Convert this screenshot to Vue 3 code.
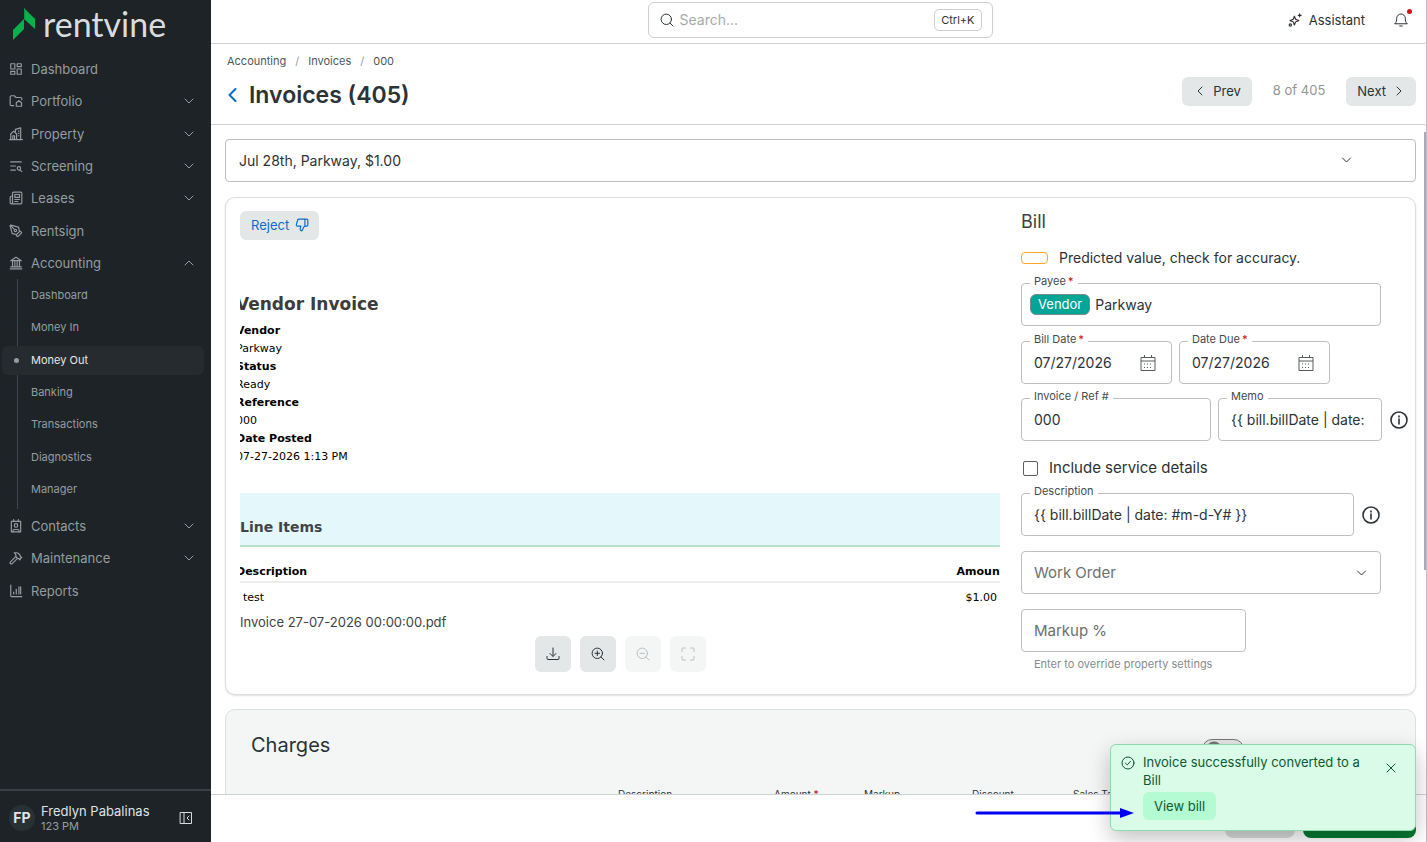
<script setup>
import { ref } from 'vue'

const mainNav = [
  { label: 'Dashboard', icon: 'dashboard' },
  { label: 'Portfolio', icon: 'portfolio', chevron: 'down' },
  { label: 'Property', icon: 'property', chevron: 'down' },
  { label: 'Screening', icon: 'screening', chevron: 'down' },
  { label: 'Leases', icon: 'leases', chevron: 'down' },
  { label: 'Rentsign', icon: 'rentsign' },
  { label: 'Accounting', icon: 'accounting', chevron: 'up' }
]
const subNav = ['Dashboard', 'Money In', 'Money Out', 'Banking', 'Transactions', 'Diagnostics', 'Manager']
const lowerNav = [
  { label: 'Contacts', icon: 'contacts', chevron: 'down' },
  { label: 'Maintenance', icon: 'maintenance', chevron: 'down' },
  { label: 'Reports', icon: 'reports' }
]

const icons = {
  dashboard: ['M3 3h7v9H3z', 'M14 3h7v5h-7z', 'M14 12h7v9h-7z', 'M3 16h7v5H3z'],
  portfolio: ['M8 20H4a2 2 0 0 1-2-2V5a2 2 0 0 1 2-2h5l3 3h8a2 2 0 0 1 2 2v2', 'M12.500 15l4.500-3.500 4.500 3.500v6h-9z'],
  property: ['M1 21.500h22', 'M3 21V12l5-5 5 5v9', 'M6.500 21v-6h3v6', 'M11 8V4l9-2.500V21', 'M16 7h1M16 11h1M16 15h1'],
  screening: ['M3 5h18', 'M3 12h8', 'M3 19h8', 'M19 19.500l3 2', 'M20 16a3 3 0 1 1-6 0 3 3 0 0 1 6 0z'],
  leases: ['M4 22h16a2 2 0 0 0 2-2V4a2 2 0 0 0-2-2H8a2 2 0 0 0-2 2v16a2 2 0 0 1-4 0v-9a2 2 0 0 1 2-2h2', 'M10 6h8v5h-8z', 'M10 14.500h8', 'M10 18h5'],
  rentsign: ['M15.700 21.300a1 1 0 0 1-1.400 0l-1.600-1.600a1 1 0 0 1 0-1.400l5.600-5.600a1 1 0 0 1 1.400 0l1.600 1.600a1 1 0 0 1 0 1.400z', 'M18 13l-1.400-6.900a1 1 0 0 0-.7-.8L3.200 2a1 1 0 0 0-1.200 1.200l3.300 12.700a1 1 0 0 0 .8.700L13 18', 'M2.300 2.300l7.300 7.300', 'M13 11a2 2 0 1 1-4 0 2 2 0 0 1 4 0z'],
  accounting: ['M2 22h20', 'M3 18.500h18', 'M3 8l9-6 9 6z', 'M6 9v9M10 9v9M14 9v9M18 9v9'],
  contacts: ['M4 4h16v18H4z', 'M8 1v3M16 1v3', 'M15 11a3 3 0 1 1-6 0 3 3 0 0 1 6 0z', 'M7 22v-2a2 2 0 0 1 2-2h6a2 2 0 0 1 2 2v2'],
  maintenance: ['M14.500 12.500L5.500 21.500a2.100 2.100 0 0 1-3-3l9-9', 'M17.500 15l4.500-4.500', 'M21.500 11.500l-1.900-1.900a2 2 0 0 1-.6-1.400V7l-2.300-2.300A6 6 0 0 0 12.500 3H9l1 .8A6.200 6.200 0 0 1 12 8.400V10l2.500 2.500h1.200a2 2 0 0 1 1.400.6L19 15'],
  reports: ['M3 2v18a1.500 1.500 0 0 0 1.500 1.500H22', 'M8 17v-3', 'M12.500 17V9', 'M17 17V5M20 17V5']
}

const search = ref('')
const markup = ref('')
const template = '{{ bill.billDate | date: #m-d-Y# }}'
const docRows = [
  ['Vendor', 'Parkway'],
  ['Status', 'Ready'],
  ['Reference', '000'],
  ['Date Posted', '07-27-2026 1:13 PM']
]
</script>

<template>
  <div class="shell">
    <aside class="sidebar">
      <a class="brand" href="#" aria-label="rentvine">
        <svg class="brand-mark" viewBox="0 0 22 32" aria-hidden="true">
          <path d="M11 0L22 11V21L11 11Z" fill="#0bb14f" />
          <path d="M0 22L11 11V21L0 32Z" fill="#0bb14f" />
          <path d="M11 0V11L12 12V1Z" fill="#06943f" />
        </svg>
        <span>rentvine</span>
      </a>
      <nav class="nav" aria-label="Main">
        <ul class="nav-list nav-main">
          <li v-for="item in mainNav" :key="item.label">
            <a class="nav-item" href="#">
              <svg class="nav-icon" viewBox="0 0 24 24"><path v-for="d in icons[item.icon]" :key="d" :d="d" /></svg>
              <span>{{ item.label }}</span>
              <svg v-if="item.chevron" class="nav-chevron" :class="{ up: item.chevron === 'up' }" viewBox="0 0 10 10"><path d="M1 3l4 4 4-4" /></svg>
            </a>
          </li>
        </ul>
        <ul class="nav-list nav-sub">
          <li v-for="label in subNav" :key="label">
            <a class="sub-item" :class="{ active: label === 'Money Out' }" href="#">{{ label }}</a>
          </li>
        </ul>
        <ul class="nav-list nav-lower">
          <li v-for="item in lowerNav" :key="item.label">
            <a class="nav-item" href="#">
              <svg class="nav-icon" viewBox="0 0 24 24"><path v-for="d in icons[item.icon]" :key="d" :d="d" /></svg>
              <span>{{ item.label }}</span>
              <svg v-if="item.chevron" class="nav-chevron" viewBox="0 0 10 10"><path d="M1 3l4 4 4-4" /></svg>
            </a>
          </li>
        </ul>
      </nav>
      <div class="user">
        <span class="avatar">FP</span>
        <div class="user-text">
          <span class="user-name">Fredlyn Pabalinas</span>
          <span class="user-time">123 PM</span>
        </div>
        <button class="collapse" type="button" aria-label="Collapse sidebar">
          <svg viewBox="0 0 14 14"><path d="M1.500 1.500h11v11h-11zM5 1.500v11M10 5L8 7l2 2" /></svg>
        </button>
      </div>
    </aside>

    <div class="main">
      <header class="topbar">
        <div class="search">
          <svg class="search-icon" viewBox="0 0 14 14"><path d="M11.500 6.300a5.200 5.200 0 1 1-10.400 0 5.200 5.200 0 0 1 10.400 0zM10 10l3 3" /></svg>
          <input v-model="search" type="text" placeholder="Search..." aria-label="Search" />
          <kbd>Ctrl+K</kbd>
        </div>
        <div class="top-actions">
          <button class="assistant" type="button">
            <svg viewBox="0 0 24 24"><path d="M11 5.500l1.700 4.300a2.500 2.500 0 0 0 1.400 1.400L18.500 13l-4.400 1.700a2.500 2.500 0 0 0-1.400 1.400L11 20.500l-1.700-4.400a2.500 2.500 0 0 0-1.400-1.400L3.500 13l4.400-1.800a2.500 2.500 0 0 0 1.400-1.400z" /><path d="M20 1.500v5M17.500 4h5" /><circle cx="4" cy="20.500" r="2" /></svg>
            Assistant
          </button>
          <button class="bell" type="button" aria-label="Notifications">
            <svg viewBox="0 0 14 16"><path d="M1 11.500c1.400-1.400 1.700-2.700 1.700-5.200a4.300 4.300 0 0 1 8.600 0c0 2.500.3 3.800 1.700 5.200z" /><path d="M5.700 14h2.600" /></svg>
            <span class="dot"></span>
          </button>
        </div>
      </header>

      <div class="page-head">
        <div>
          <nav class="crumbs" aria-label="Breadcrumb">
            <a href="#">Accounting</a><i>/</i><a href="#">Invoices</a><i>/</i><a href="#">000</a>
          </nav>
          <h1>
            <a class="back" href="#" aria-label="Back"><svg viewBox="0 0 9 14"><path d="M7.500 1l-6 6 6 6" /></svg></a>
            Invoices (405)
          </h1>
        </div>
        <div class="pager">
          <button class="btn" type="button"><svg viewBox="0 0 6 10"><path d="M5 1L1 5l4 4" /></svg>Prev</button>
          <span>8 of 405</span>
          <button class="btn" type="button">Next<svg viewBox="0 0 6 10"><path d="M1 1l4 4-4 4" /></svg></button>
        </div>
      </div>

      <main class="content">
        <div class="picker">
          <select aria-label="Invoice">
            <option>Jul 28th, Parkway, $1.00</option>
          </select>
          <svg viewBox="0 0 10 6"><path d="M1 1l4 4 4-4" /></svg>
        </div>

        <section class="card invoice">
          <div class="preview">
            <button class="btn reject" type="button">
              Reject
              <svg viewBox="0 0 24 24"><path d="M17 14V2M9 18.100L10 14H4.200a2 2 0 0 1-1.900-2.600l2.300-8A2 2 0 0 1 6.500 2H20a2 2 0 0 1 2 2v8a2 2 0 0 1-2 2h-2.800a2 2 0 0 0-1.800 1.100L12 22a3.100 3.100 0 0 1-3-3.900z" /></svg>
            </button>
            <div class="doc">
              <div class="doc-body">
                <h2>Vendor Invoice</h2>
                <dl>
                  <template v-for="row in docRows" :key="row[0]">
                    <dt>{{ row[0] }}</dt>
                    <dd>{{ row[1] }}</dd>
                  </template>
                </dl>
                <h3>Line Items</h3>
                <table>
                  <thead>
                    <tr><th>Description</th><th class="num">Amount</th></tr>
                  </thead>
                  <tbody>
                    <tr><td>test</td><td class="num">$1.00</td></tr>
                  </tbody>
                </table>
              </div>
            </div>
            <p class="file">Invoice 27-07-2026 00:00:00.pdf</p>
            <div class="tools">
              <button type="button" aria-label="Download"><svg viewBox="0 0 14 14"><path d="M7 1v8M4 6.500l3 3 3-3M1 9.500v2a1 1 0 0 0 1 1h10a1 1 0 0 0 1-1v-2" /></svg></button>
              <button type="button" aria-label="Zoom in"><svg viewBox="0 0 14 14"><path d="M11.500 6.300a5.200 5.200 0 1 1-10.400 0 5.200 5.200 0 0 1 10.400 0zM10 10l3 3M6.300 4v4.600M4 6.300h4.600" /></svg></button>
              <button type="button" aria-label="Zoom out" disabled><svg viewBox="0 0 14 14"><path d="M11.500 6.300a5.200 5.200 0 1 1-10.400 0 5.200 5.200 0 0 1 10.400 0zM10 10l3 3M4 6.300h4.600" /></svg></button>
              <button type="button" aria-label="Fit to screen" disabled><svg viewBox="0 0 14 14"><path d="M1 4.500V2a1 1 0 0 1 1-1h2.500M9.500 1H12a1 1 0 0 1 1 1v2.500M13 9.500V12a1 1 0 0 1-1 1H9.500M4.500 13H2a1 1 0 0 1-1-1V9.500" /></svg></button>
            </div>
          </div>

          <form class="bill" @submit.prevent>
            <h2>Bill</h2>
            <p class="legend"><span class="swatch"></span>Predicted value, check for accuracy.</p>

            <div class="field payee">
              <label for="payee">Payee<b>*</b></label>
              <span class="chip">Vendor</span>
              <input id="payee" type="text" value="Parkway" />
            </div>

            <div class="row dates-row">
              <div class="field date">
                <label for="bill-date">Bill Date<b>*</b></label>
                <input id="bill-date" type="text" value="07/27/2026" />
                <svg class="cal" viewBox="0 0 16 18"><path d="M1 3.500h14v13H1zM1 7h14M4.500 1v3M11.500 1v3" /><path class="dots" d="M4 10h8M4 13.500h8" /></svg>
              </div>
              <div class="field date">
                <label for="date-due">Date Due<b>*</b></label>
                <input id="date-due" type="text" value="07/27/2026" />
                <svg class="cal" viewBox="0 0 16 18"><path d="M1 3.500h14v13H1zM1 7h14M4.500 1v3M11.500 1v3" /><path class="dots" d="M4 10h8M4 13.500h8" /></svg>
              </div>
            </div>

            <div class="row">
              <div class="field ref">
                <label for="ref-no">Invoice / Ref #</label>
                <input id="ref-no" type="text" value="000" />
              </div>
              <div class="field memo">
                <label for="memo">Memo</label>
                <input id="memo" type="text" :value="template" />
              </div>
              <svg class="info" viewBox="0 0 18 18"><circle cx="9" cy="9" r="8" /><path d="M9 8v5M9 5v1" /></svg>
            </div>

            <label class="check"><input type="checkbox" />Include service details</label>

            <div class="row">
              <div class="field desc">
                <label for="desc">Description</label>
                <input id="desc" type="text" :value="template" />
              </div>
              <svg class="info" viewBox="0 0 18 18"><circle cx="9" cy="9" r="8" /><path d="M9 8v5M9 5v1" /></svg>
            </div>

            <div class="field order">
              <select aria-label="Work Order"><option>Work Order</option></select>
              <svg class="arrow" viewBox="0 0 10 6"><path d="M1 1l4 4 4-4" /></svg>
            </div>

            <div class="field markup">
              <input v-model="markup" type="text" placeholder="Markup %" aria-label="Markup %" aria-describedby="markup-hint" />
            </div>
            <p id="markup-hint" class="hint">Enter to override property settings</p>
          </form>
        </section>

        <section class="card charges">
          <div class="charges-head">
            <h2>Charges</h2>
            <input class="switch" type="checkbox" role="switch" aria-label="Charges option" />
          </div>
          <div class="charges-cols">
            <span>Description</span><span>Amount <b>*</b></span><span>Markup</span><span>Discount</span><span>Sales Tax</span>
          </div>
        </section>
        <span class="scrollbar"></span>
      </main>

      <footer class="actions">
        <button class="secondary" type="button" aria-label="Cancel"></button>
        <button class="primary" type="button" aria-label="Save"></button>
      </footer>
    </div>

    <div class="toast" role="status">
      <svg class="ok" viewBox="0 0 14 14"><circle cx="7" cy="7" r="6" /><path d="M4.500 7.200l1.800 1.700 3.200-3.600" /></svg>
      <div>
        <p>Invoice successfully converted to a Bill</p>
        <button class="view" type="button">View bill</button>
      </div>
      <button class="close" type="button" aria-label="Close"><svg viewBox="0 0 10 10"><path d="M1 1l8 8M9 1L1 9" /></svg></button>
    </div>
    <svg class="pointer" viewBox="0 0 160 12" aria-hidden="true"><path d="M2 6h144" stroke="#0000f5" stroke-width="3" stroke-linecap="round" /><path d="M145 1l14 5-14 5z" fill="#0000f5" /></svg>
  </div>
</template>

<style>
body {
  margin: 0;
  overflow: hidden;
}
</style>

<style scoped>
* {
  box-sizing: border-box;
}
.shell {
  display: flex;
  position: relative;
  height: 100vh;
  font-family: Inter, "Liberation Sans", sans-serif;
  color: #2c3236;
  background: #fff;
  overflow: hidden;
}
svg {
  fill: none;
  stroke: currentColor;
  stroke-linecap: round;
  stroke-linejoin: round;
  flex: none;
}
button, input, select {
  font: inherit;
  color: inherit;
}
button {
  border: 0;
  padding: 0;
  cursor: pointer;
}
a {
  color: inherit;
  text-decoration: none;
}
h1, h2, h3, p, dl, dd, ul {
  margin: 0;
  padding: 0;
}

/* Sidebar */
.sidebar {
  display: flex;
  flex-direction: column;
  flex: none;
  width: 211px;
  background: #1e2327;
  color: #949da3;
}
.brand {
  display: flex;
  align-items: center;
  gap: 8px;
  height: 53px;
  padding: 0 0 5px 13px;
  font-family: Lato, sans-serif;
  font-size: 34px;
  line-height: 40px;
  color: #d9dcdf;
}
.brand-mark {
  width: 22px;
  height: 32px;
  stroke: none;
}
.nav {
  flex: 1;
}
.nav-list {
  display: grid;
  grid-auto-rows: 1fr;
  list-style: none;
}
.nav-main {
  height: 226px;
}
.nav-sub {
  position: relative;
  height: 227px;
  margin-bottom: 4px;
}
.nav-sub::before {
  content: "";
  position: absolute;
  left: 17px;
  top: 0;
  bottom: -3px;
  width: 1px;
  background: #41484d;
}
.nav-lower {
  height: 97px;
}
.nav-list li {
  display: flex;
  align-items: center;
}
.nav-item {
  display: flex;
  flex: 1;
  align-items: center;
  gap: 8px;
  padding: 0 17px 0 9px;
  font-size: 13px;
  line-height: 20px;
}
.nav-icon {
  width: 14px;
  height: 14px;
  stroke-width: 2;
}
.nav-chevron {
  width: 10px;
  height: 10px;
  margin-left: auto;
}
.nav-chevron.up {
  transform: rotate(180deg);
}
.sub-item {
  position: relative;
  flex: 1;
  margin: 0 7px 0 2px;
  padding: 0 29px;
  border-radius: 6px;
  font-size: 11px;
  line-height: 29px;
}
.sub-item.active {
  background: #262b2f;
  color: #e6e8ea;
}
.sub-item.active::before {
  content: "";
  position: absolute;
  left: 12px;
  top: 12px;
  width: 5px;
  height: 5px;
  border-radius: 50%;
  background: #949da3;
}
.user {
  display: flex;
  align-items: center;
  height: 53px;
  padding: 2px 18px 0 9px;
  border-top: 2px solid #394045;
}
.avatar {
  width: 26px;
  height: 26px;
  margin-right: 6px;
  border-radius: 50%;
  background: #283133;
  color: #dfe3e5;
  font-size: 14px;
  font-weight: 700;
  line-height: 26px;
  text-align: center;
}
.user-text {
  display: flex;
  flex: 1;
  flex-direction: column;
}
.user-name {
  font-size: 13px;
  line-height: 16px;
  color: #dfe3e5;
}
.user-time {
  font-size: 11px;
  line-height: 14px;
}
.collapse {
  width: 14px;
  height: 14px;
  background: none;
  color: #d9dcdf;
}
.collapse svg {
  display: block;
}

/* Top bar and page heading */
.main {
  display: flex;
  flex: 1;
  flex-direction: column;
  min-width: 0;
  border-right: 1px solid #b6c0da;
}
.topbar {
  display: grid;
  grid-template-columns: 1fr 345px 1fr;
  flex: none;
  align-items: center;
  height: 44px;
  padding: 0 15px 4px 18px;
  border-bottom: 1px solid #d0d3d3;
}
.search {
  display: flex;
  grid-column: 2;
  align-items: center;
  gap: 6px;
  height: 36px;
  padding: 0 10px 0 11px;
  border: 1px solid #cbcfcf;
  border-radius: 6px;
}
.search-icon {
  width: 14px;
  height: 14px;
}
.search input {
  flex: 1;
  min-width: 0;
  padding: 0;
  border: 0;
  outline: 0;
  background: none;
  font-size: 14px;
}
.search input::placeholder {
  color: #a3acac;
}
kbd {
  padding: 0 6px;
  border: 1px solid #cbcfcf;
  border-radius: 5px;
  font: 11px/20px Inter, sans-serif;
}
.top-actions {
  display: flex;
  align-items: center;
  justify-content: flex-end;
  gap: 29px;
  padding-right: 3px;
}
.assistant {
  display: flex;
  align-items: center;
  gap: 7px;
  background: none;
  font-size: 13px;
}
.assistant svg {
  width: 14px;
  height: 14px;
  stroke-width: 2;
}
.bell {
  position: relative;
  width: 14px;
  height: 16px;
  background: none;
}
.bell svg {
  display: block;
}
.dot {
  position: absolute;
  top: -3px;
  right: -4px;
  width: 5px;
  height: 5px;
  border-radius: 50%;
  background: #d01414;
}
.page-head {
  display: flex;
  flex: none;
  justify-content: space-between;
  height: 81px;
  padding: 9px 10px 0 16px;
  border-bottom: 1px solid #d0d3d3;
}
.crumbs {
  display: flex;
  gap: 9px;
  font-size: 11px;
  line-height: 16px;
  color: #4d5759;
}
.crumbs i {
  font-style: normal;
  color: #939b9c;
}
h1 {
  display: flex;
  align-items: center;
  gap: 12px;
  margin-top: 10px;
  font-size: 23px;
  font-weight: 600;
  line-height: 32px;
}
.back {
  display: flex;
  margin-left: 1px;
  color: #0a6cc9;
}
.back svg {
  width: 9px;
  height: 14px;
  stroke-width: 2;
}
.pager {
  display: flex;
  align-items: flex-start;
  gap: 21px;
  padding-top: 24px;
  font-size: 13px;
}
.pager span {
  line-height: 27px;
  color: #919595;
}
.btn {
  display: flex;
  align-items: center;
  gap: 10px;
  height: 29px;
  padding: 0 11px;
  border-radius: 6px;
  background: #e3e7e7;
  font-size: 13px;
}
.pager .btn {
  padding: 0 11px 2px 11px;
}
.pager .btn:first-child {
  padding-left: 15px;
}
.pager .btn:last-child {
  padding-right: 14px;
}
.btn svg {
  width: 6px;
  height: 10px;
}

/* Scrolling content */
.content {
  position: relative;
  flex: 1;
  min-height: 0;
  padding: 14px 10px 0 14px;
  overflow: hidden;
}
.scrollbar {
  position: absolute;
  top: 7px;
  right: 0;
  width: 2px;
  height: 438px;
  background: #a3afb8;
}
.picker {
  position: relative;
  height: 43px;
  margin-bottom: 15px;
}
.picker select {
  width: 100%;
  height: 100%;
  padding: 0 13px;
  border: 1px solid #bcc0c0;
  border-radius: 4px;
  background: #fff;
  appearance: none;
  font-size: 14px;
}
.picker svg {
  position: absolute;
  top: 18px;
  right: 64px;
  width: 11px;
  height: 6px;
}
.card {
  border: 1px solid #dcdfdf;
  border-radius: 10px;
  background: #fff;
}
.invoice {
  display: grid;
  grid-template-columns: minmax(0, 1fr) 387px;
  gap: 21px;
  height: 498px;
  padding: 13px 7px 0 14px;
  margin-bottom: 14px;
  box-shadow: 0 1px 2px rgba(0, 0, 0, 0.12);
}
.preview {
  display: flex;
  flex-direction: column;
}
.reject {
  align-self: flex-start;
  gap: 6px;
  padding: 0 10px 2px 11px;
  color: #0a6cc9;
}
.reject svg {
  width: 14px;
  height: 14px;
  stroke-width: 2;
}
.doc {
  overflow: hidden;
  margin-top: 50px;
  font-family: "DejaVu Sans", sans-serif;
  font-size: 11px;
  line-height: 18px;
  color: #000;
}
.doc-body {
  margin: 0 -5px 0 -4px;
}
.doc h2 {
  margin-bottom: 4px;
  font-size: 17px;
  font-weight: 700;
  line-height: 28px;
  color: #3c3c3c;
}
.doc dt {
  font-weight: 700;
}
.doc h3 {
  margin-top: 27px;
  padding: 21px 4px 5px;
  border-bottom: 2px solid #b5e2c9;
  background: #e4f8fc;
  font-size: 14px;
  font-weight: 700;
  line-height: 26px;
  color: #444;
}
.doc table {
  width: 100%;
  margin-top: 14px;
  border-collapse: collapse;
}
.doc th {
  padding: 2px 0 0;
  border-bottom: 2px solid #ececec;
  text-align: left;
}
.doc td {
  padding: 6px 8px 5px 7px;
}
.doc .num {
  text-align: right;
}
.file {
  font-size: 13px;
  line-height: 20px;
  color: #3d4244;
}
.tools {
  display: flex;
  justify-content: center;
  gap: 9px;
  margin-top: 4px;
}
.tools button {
  display: grid;
  place-items: center;
  width: 36px;
  height: 36px;
  border-radius: 6px;
  background: #e3e7e7;
}
.tools button:disabled {
  background: #f4f6f6;
  color: #b9bfc0;
}
.tools svg {
  width: 14px;
  height: 14px;
}

/* Bill form */
.bill h2 {
  font-size: 18px;
  font-weight: 400;
  line-height: 22px;
  color: #3c4244;
}
.legend {
  display: flex;
  align-items: center;
  gap: 11px;
  margin: 14px 0;
  font-size: 14px;
  line-height: 22px;
}
.swatch {
  width: 27px;
  height: 12px;
  border: 1px solid #f9a825;
  border-radius: 4px;
}
.row {
  display: flex;
  align-items: center;
  gap: 7px;
  margin-top: 14px;
}
.dates-row {
  margin-top: 15px;
}
.field {
  display: flex;
  position: relative;
  align-items: center;
  height: 43px;
  padding: 0 12px;
  border: 1px solid #bcc0c0;
  border-radius: 4px;
  font-size: 14px;
}
.field > label {
  position: absolute;
  top: -10px;
  left: 8px;
  padding: 0 4px;
  background: #fff;
  font-size: 11px;
  line-height: 14px;
  color: #454b4d;
}
.field > label b,
.charges-cols b {
  margin-left: 2px;
  font-weight: 500;
  color: #c21717;
}
.charges-cols b {
  margin-left: 0;
}
.field input,
.field select {
  flex: 1;
  width: 0;
  min-width: 0;
  height: 24px;
  padding: 0;
  border: 0;
  outline: 0;
  background: none;
  appearance: none;
}
.field select {
  font-size: 15px;
  color: #6b7072;
}
.field input::placeholder {
  font-size: 15px;
  color: #6b7072;
}
.payee {
  gap: 5px;
  width: 360px;
  padding-left: 8px;
}
.chip {
  padding: 0 7px 1px;
  border: 1px solid #808a88;
  border-radius: 6px;
  background: #03a596;
  color: #fff;
  font-size: 13px;
  line-height: 18px;
}
.date {
  width: 151px;
  padding-right: 15px;
}
.cal {
  width: 16px;
  height: 18px;
  color: #565b5d;
  stroke-linecap: butt;
}
.dots {
  stroke-dasharray: 1 2;
}
.ref {
  width: 190px;
}
.memo {
  flex: 1;
  padding-right: 14px;
}
.info {
  width: 18px;
  height: 18px;
  margin-left: 1px;
}
.info circle,
.info path {
  stroke-width: 1.600;
}
.check {
  display: flex;
  align-items: center;
  gap: 11px;
  margin: 16px 0 0 2px;
  font-size: 15px;
  line-height: 22px;
}
.check input {
  width: 15px;
  height: 15px;
  margin: 0;
  border: 1px solid #5c6163;
  border-radius: 2px;
  appearance: none;
}
.desc {
  width: 333px;
}
.order {
  width: 360px;
  margin-top: 15px;
  padding-right: 13px;
}
.arrow {
  width: 11px;
  height: 6px;
}
.markup {
  width: 225px;
  margin-top: 15px;
}
.hint {
  padding: 4px 13px 0;
  font-size: 11px;
  line-height: 16px;
  color: #878c8d;
}

/* Charges */
.charges {
  height: 300px;
  background: #f4f6f6;
}
.charges-head {
  display: flex;
  align-items: flex-start;
  justify-content: space-between;
  padding: 21px 171px 0 25px;
}
.charges h2 {
  font-size: 20px;
  font-weight: 400;
  line-height: 28px;
}
.switch {
  width: 42px;
  height: 20px;
  margin: 8px 0 0;
  border: 1px solid #777;
  border-radius: 10px;
  background: radial-gradient(circle at 11px 9px, #777 7px, #e6e6e6 8px);
  appearance: none;
}
.charges-cols {
  display: grid;
  grid-template-columns: 156px 90px 108px 101px 1fr;
  padding: 27px 0 0 392px;
  font-size: 10px;
  line-height: 16px;
}
.actions {
  display: flex;
  flex: none;
  gap: 8px;
  justify-content: flex-end;
  height: 48px;
  padding: 6px 10px 4px;
  border-top: 1px solid #cfd2d2;
}
.actions button {
  border-radius: 8px;
}
.secondary {
  width: 70px;
  background: #d9dcdc;
}
.primary {
  width: 113px;
  background: #087a33;
}

/* Overlays */
.toast {
  display: grid;
  position: absolute;
  right: 11px;
  bottom: 11px;
  grid-template-columns: 14px 1fr 10px;
  gap: 8px;
  width: 306px;
  padding: 8px 19px 10px 10px;
  border: 1px solid #8fd9ad;
  border-radius: 6px;
  background: #dafbe8;
  color: #0c5a30;
  font-size: 13px;
  line-height: 18px;
  box-shadow: 0 8px 22px rgba(0, 0, 0, 0.24);
}
.toast > div {
  padding-right: 14px;
}
.ok {
  width: 14px;
  height: 14px;
  margin-top: 3px;
}
.view {
  margin-top: 3px;
  padding: 0 11px;
  border-radius: 6px;
  background: #b4fad2;
  line-height: 28px;
}
.close {
  width: 10px;
  height: 10px;
  margin-top: 10px;
  background: none;
}
.close svg {
  display: block;
}
.pointer {
  position: absolute;
  right: 292px;
  bottom: 23px;
  width: 160px;
  height: 12px;
  stroke: none;
}
</style>
